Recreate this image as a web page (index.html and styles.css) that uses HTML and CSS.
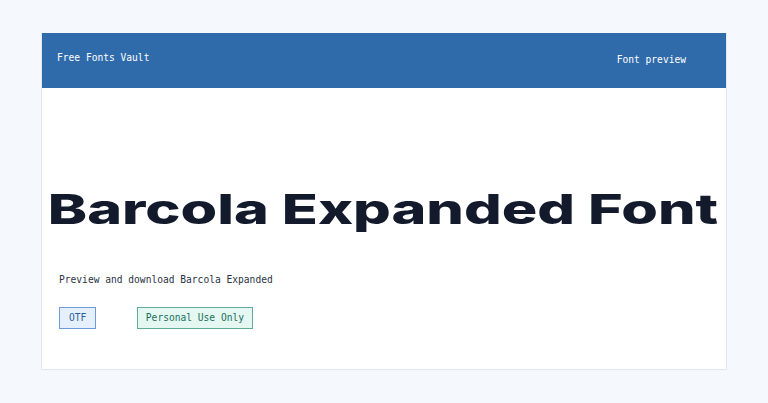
FILE: index.html
```html
<!DOCTYPE html>
<html>
<head>
  <title>Barcola Expanded Font - Free Fonts Vault</title>
  <link rel="stylesheet" href="styles.css">
</head>
<body>
  <div class="card">
    <header class="topbar">
      <div class="brand">Free Fonts Vault</div>
      <nav class="nav">Font preview</nav>
    </header>

    <main class="preview">
      <h1 class="title"><span class="title-text">Barcola Expanded Font</span></h1>
      <p class="lead">Preview and download Barcola Expanded</p>
      <div class="tags">
        <span class="tag tag-format">OTF</span>
        <span class="tag tag-license">Personal Use Only</span>
      </div>
    </main>
  </div>
</body>
</html>
```

FILE: styles.css
```css
body {
  margin: 0;
  padding: 33px 41px;
  background-color: #f5f9fe;
  font-family: "DejaVu Sans Mono", "Liberation Mono", monospace;
  font-size: 9.6px;
  color: #1f2937;
}

.card {
  background-color: #fff;
  border: 1px solid #e3e8f0;
  border-top: 0;
  height: 337px;
  box-sizing: border-box;
}

.topbar {
  display: flex;
  justify-content: space-between;
  align-items: center;
  height: 55px;
  padding: 0 40px 0 15px;
  background-color: #2f6bab;
  color: #fff;
}

.brand {
  margin-top: -6px;
}

.nav {
  margin-top: -2px;
}

.preview {
  padding: 0 17px;
}

.title {
  margin: 96px 0 0;
  text-align: center;
  font-family: Inter, "Noto Sans", sans-serif;
  font-weight: 800;
  font-size: 41px;
  line-height: 50px;
  color: #121a2b;
}

.title-text {
  display: inline-block;
  transform: scaleX(1.445);
  margin-left: -2px;
}

.lead {
  margin: 39px 0 0;
  line-height: 14px;
  color: #2b3343;
}

.tags {
  display: flex;
  gap: 41px;
  margin-top: 20px;
}

.tag {
  height: 22px;
  line-height: 20px;
  box-sizing: border-box;
  padding: 0 7.5px;
  border: 1px solid;
}

.tag-format {
  padding: 0 9px;
  background-color: #e6f0fd;
  border-color: #6f9bd6;
  color: #2b5e9c;
}

.tag-license {
  background-color: #e5f7f1;
  border-color: #5eac97;
  color: #16705d;
}
```
